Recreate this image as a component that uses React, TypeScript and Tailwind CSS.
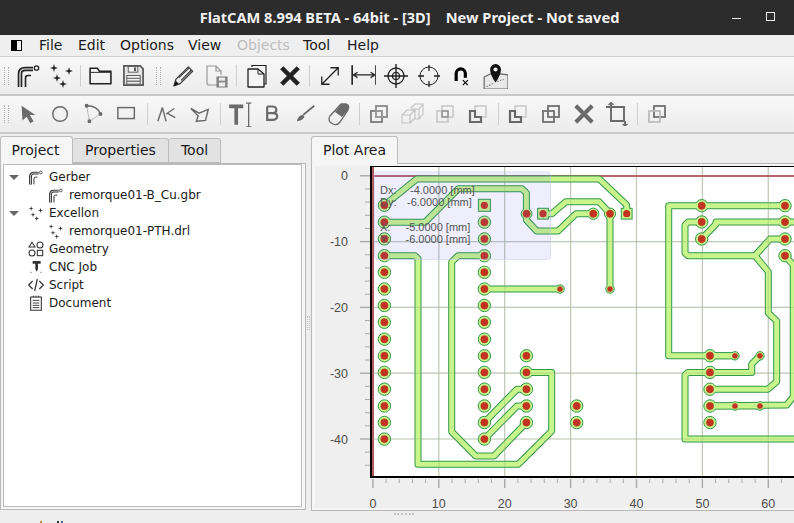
import React from "react";

const PADS_Y = [205.3, 222.2, 238.9, 255.7, 272.3, 289, 305.5, 322.3, 339.2, 355.8, 372.4, 389.2, 406, 422.5, 439.1];

type Pad = [number, number, number];

const PADS: Pad[] = [
  ...PADS_Y.map((y) => [384.4, y, 6.2] as Pad),
  ...PADS_Y.slice(1).map((y) => [484.4, y, 6.2] as Pad),
  [526.4, 355.8, 6.2],
  [526.4, 372.4, 6.2],
  [526.4, 389.2, 6.2],
  [526.4, 406, 6.2],
  [526.4, 422.5, 6.2],
  [526.6, 213.7, 5.4],
  [593.3, 213.7, 5.6],
  [610, 213.7, 5.6],
  [610, 289, 4.2],
  [560, 289, 4.2],
  [576.7, 406, 6.2],
  [576.7, 422.6, 6.2],
  [701.7, 205.7, 6.2],
  [701.7, 222, 6.2],
  [701.7, 239, 6.2],
  [785, 205.7, 6.2],
  [785, 222, 6.2],
  [785, 239, 6.2],
  [785, 255.7, 6.2],
  [710, 355.8, 6.2],
  [710, 372.4, 6.2],
  [710, 389.2, 6.2],
  [710, 406, 6.2],
  [710, 422.6, 6.2],
  [735, 355.8, 4.2],
  [760, 355.8, 4.2],
  [735, 406, 4.2],
  [760, 406, 4.2],
];

const SQUARES: [number, number, number][] = [
  [484.4, 205.3, 6],
  [543, 213.7, 5.4],
  [626.7, 213.7, 5.4],
];

const TRACKS = [
  "384.4,205.3 416.7,179 599.3,179 626.7,205 626.7,213.7",
  "384.4,222.2 425,222.2 458.3,188.7 522,188.7 526.4,193 526.4,220 536.7,231 558,231 576,213.7 593.3,213.7",
  "543,213.7 552,213.7 566,201.7 599,201.7 610,213.7 610,289",
  "384.4,255.7 415,255.7 418,258.5 418,464.3 518.3,464.3 551.7,431 551.7,372.4 526.4,372.4",
  "484.4,255.7 458,255.7 451.7,262 451.7,431.7 475.7,456 494,456 526.4,422.5",
  "484.4,422.5 517,389.2 526.4,389.2",
  "484.4,439.1 517,406 526.4,406",
  "484.4,289 560,289",
  "785,205.7 668.7,205.7 668.7,355.8 735,355.8",
  "701.7,222 688,222 685,225 685,253 688,255.7 755,255.7 770,239 785,239",
  "755,255.7 768.3,271.7 768.3,313 776.7,321 776.7,381.7 768,389.2 710,389.2",
  "701.7,239 716,224 716,222 800,222",
  "785,255.7 793.3,265 793.3,396.7 786.7,405 710,406",
  "760,355.8 751.7,364 751.7,372.4 688,372.4 685,375 685,439 800,439",
  "710,355.8 735,355.8",
  "710,406 760,406",
];

const X_LABELS = [0, 10, 20, 30, 40, 50, 60];
const Y_LABELS = [0, -10, -20, -30, -40];
const xAt = (u: number) => 372.9 + 6.59 * u;
const yAt = (v: number) => 175.8 - 6.58 * v;

function Plot() {
  const xMinor = Array.from({ length: 33 }, (_, i) => i * 2);
  const yMinor = Array.from({ length: 23 }, (_, i) => -i * 2);
  const grid = (
    <>
      {X_LABELS.slice(1).map((u) => (
        <line key={u} x1={xAt(u)} x2={xAt(u)} y1="167" y2="477" strokeWidth="1.2" />
      ))}
      {Y_LABELS.slice(1).map((v) => (
        <line key={v} x1="372" x2="794" y1={yAt(v)} y2={yAt(v)} strokeWidth="1.2" />
      ))}
    </>
  );
  return (
    <svg width="479" height="342" viewBox="315 166 479 342" className="block overflow-visible font-['Liberation_Sans',sans-serif]">
      <rect x="315" y="166" width="479" height="342" fill="#efefef" />
      <rect x="372" y="167" width="422" height="310" fill="#ffffff" />
      <g stroke="#d6d6d6">{grid}</g>
      <line x1="373" x2="794" y1="176" y2="176" stroke="#b9656a" strokeWidth="2" />
      <line x1="373" x2="373" y1="167" y2="477" stroke="#b05a5f" strokeWidth="2" />

      {TRACKS.map((t) => (
        <polyline key={t} points={t} fill="none" stroke="#32984a" strokeWidth="7" strokeLinejoin="round" strokeLinecap="round" />
      ))}
      {PADS.map(([x, y, r]) => (
        <circle key={`${x}-${y}`} cx={x} cy={y} r={r} fill="#c8f58c" stroke="#32984a" strokeWidth="1" />
      ))}
      {SQUARES.map(([x, y, r]) => (
        <rect key={x} x={x - r} y={y - r} width={r * 2} height={r * 2} fill="#c8f58c" stroke="#32984a" strokeWidth="1" />
      ))}
      {TRACKS.map((t) => (
        <polyline key={t} points={t} fill="none" stroke="#c8f58c" strokeWidth="5" strokeLinejoin="round" strokeLinecap="round" />
      ))}
      <g stroke="#8fae6c" strokeOpacity="0.3">{grid}</g>
      {PADS.map(([x, y, r]) => (
        <circle key={`${x}-${y}`} cx={x} cy={y} r={r > 5 ? 3.7 : 2.6} fill="#c4331f" stroke="#a33a25" strokeWidth="0.4" />
      ))}
      {SQUARES.map(([x, y]) => (
        <circle key={x} cx={x} cy={y} r="3.6" fill="#c4331f" />
      ))}

      <rect x="374.5" y="172" width="176" height="87.5" rx="3" fill="#6464f0" fillOpacity="0.11" stroke="#c8c8ee" strokeWidth="0.5" />
      <g fill="#555555" fontSize="11">
        <text x="380" y="194">Dx:</text>
        <text x="410" y="194">-4.0000 [mm]</text>
        <text x="380" y="206">Dy:</text>
        <text x="407" y="206">-6.0000 [mm]</text>
        <text x="380" y="231">X:</text>
        <text x="405.5" y="231">-5.0000 [mm]</text>
        <text x="380" y="243">Y:</text>
        <text x="405.5" y="243">-6.0000 [mm]</text>
      </g>

      <line x1="371" x2="371" y1="166" y2="478" stroke="#000000" strokeWidth="2" />
      <line x1="371" x2="794" y1="166.5" y2="166.5" stroke="#000000" strokeWidth="1" />
      <line x1="370" x2="794" y1="477" stroke="#000000" y2="477" strokeWidth="2" />

      {yMinor.map((v) => (
        <line key={v} x1={v % 10 === 0 ? 360 : 365} x2="370" y1={yAt(v)} y2={yAt(v)} stroke="#a8a8a8" strokeWidth={v % 10 === 0 ? 1.4 : 1} />
      ))}
      {xMinor.map((u) => (
        <line key={u} x1={xAt(u)} x2={xAt(u)} y1="479" y2={u % 10 === 0 ? 488 : 483} stroke="#a8a8a8" strokeWidth={u % 10 === 0 ? 1.4 : 1} />
      ))}
      <g fill="#4d4d4d" fontSize="12.5">
        {Y_LABELS.map((v) => (
          <text key={v} x="348" y={yAt(v) + 4.5} textAnchor="end">
            {v}
          </text>
        ))}
        {X_LABELS.map((u) => (
          <text key={u} x={xAt(u)} y="507.5" textAnchor="middle">
            {u}
          </text>
        ))}
      </g>
    </svg>
  );
}

function Svg({ children, className, size = 24 }: { children: React.ReactNode; className?: string; size?: number }) {
  return (
    <svg width={size} height={size} viewBox="0 0 24 24" fill="none" stroke="currentColor" strokeWidth="1.5" className={className}>
      {children}
    </svg>
  );
}

const GerberIcon = ({ size = 24 }: { size?: number }) => (
  <Svg size={size}>
    <path d="M4 23V10Q4 5 9 5H17" strokeWidth="4.6" />
    <path d="M4 23V10Q4 5 9 5H17" stroke="#f5f5f5" strokeWidth="1.2" />
    <path d="M9.5 23V14Q9.5 11.5 12 11.5H15" strokeWidth="1.6" />
    <circle cx="20.5" cy="4" r="2.2" strokeWidth="1.3" />
  </Svg>
);

const star = (x: number, y: number, r: number) =>
  `M${x} ${y - r}L${x + 0.9} ${y - 0.9}L${x + r} ${y}L${x + 0.9} ${y + 0.9}L${x} ${y + r}L${x - 0.9} ${y + 0.9}L${x - r} ${y}L${x - 0.9} ${y - 0.9}Z`;

const DrillIcon = ({ size = 24 }: { size?: number }) => (
  <Svg size={size}>
    <path d={star(5, 4, 4) + star(20, 7, 4) + star(8, 14, 4) + star(14, 20, 4)} fill="currentColor" stroke="none" />
  </Svg>
);

const FolderIcon = () => (
  <Svg size={25}>
    <path d="M2 20V5H9L11 8H22V20Z" strokeWidth="1.5" strokeLinejoin="round" />
    <path d="M2 9H22" strokeWidth="0.9" />
  </Svg>
);

const SaveIcon = () => (
  <Svg size={23}>
    <path d="M2 2H19L22 5V22H2Z" fill="#e6e6e6" stroke="#585858" strokeWidth="1.8" />
    <rect x="6.5" y="2.5" width="10" height="6" fill="#f2f2f2" stroke="#585858" strokeWidth="1" />
    <rect x="12.5" y="3.6" width="2.2" height="3.8" fill="#585858" stroke="none" />
    <rect x="5" y="12" width="14" height="9" fill="#f2f2f2" stroke="#585858" strokeWidth="1" />
    <path d="M5 15H19M5 18H19" stroke="#777" strokeWidth="1.4" />
  </Svg>
);

const PencilIcon = () => (
  <Svg size={23} className="text-[#3a3a3a]">
    <path d="M2 23L4 16L17 3L21.5 7.5L8.5 20.5Z" strokeWidth="1.3" strokeLinejoin="round" />
    <path d="M7 14.5L18 4M9.5 17L20 6.5" strokeWidth="1.2" />
    <path d="M2 23L4 17.5L7 20.5Z" fill="#111" stroke="none" />
  </Svg>
);

const FileSaveIcon = () => (
  <Svg size={24}>
    <path d="M13 21H4Q2 21 2 19V2H11L16 7V11M11 2V7H16" stroke="#9a9a9a" strokeWidth="1.2" />
    <rect x="12" y="13" width="10" height="10" fill="#8d8d8d" stroke="#777" strokeWidth="1" />
    <rect x="14" y="13.6" width="6" height="3" fill="#eee" stroke="none" />
    <rect x="14" y="18.5" width="6" height="4" fill="#eee" stroke="none" />
  </Svg>
);

const CopyIcon = () => (
  <Svg size={24}>
    <path d="M7 3V1.5H21V20H19" strokeWidth="1.2" />
    <path d="M3 5H13L19 10V23H3Z" fill="#f5f5f5" strokeWidth="1.3" strokeLinejoin="round" />
    <path d="M13 5V10H19" strokeWidth="1" />
  </Svg>
);

const CrossIcon = ({ thin }: { thin?: boolean }) => (
  <Svg size={22}>
    <path d="M3 3L21 21M21 3L3 21" strokeWidth={thin ? 4.4 : 5} />
  </Svg>
);

const ExpandIcon = () => (
  <Svg size={22}>
    <path d="M3 21L21 3M12.5 3H21V11.5M3 12.5V21H11.5" strokeWidth="1.4" />
  </Svg>
);

const MeasureIcon = () => (
  <Svg size={26}>
    <path d="M2 2V20M24 2V20" strokeWidth="1.5" />
    <path d="M3 11H23M3 11L7 8.5M3 11L7 13.5M23 11L19 8.5M23 11L19 13.5" strokeWidth="1.1" />
  </Svg>
);

const TargetBold = () => (
  <Svg size={24}>
    <circle cx="12" cy="12" r="8" strokeWidth="1.3" />
    <circle cx="12" cy="12" r="3.6" strokeWidth="1.3" />
    <path d="M12 0V24M0 12H24" strokeWidth="1.4" />
  </Svg>
);

const TargetThin = () => (
  <Svg size={24}>
    <circle cx="12" cy="12" r="9" strokeWidth="1" />
    <path d="M12 1V7M12 17V23M1 12H7M17 12H23" strokeWidth="1.3" />
  </Svg>
);

const MagnetIcon = () => (
  <Svg size={20} className="text-black">
    <path d="M5 18V9A5.5 5.5 0 0 1 16 9V14" strokeWidth="3.8" />
    <path d="M13 17L19 23M19 17L13 23" strokeWidth="1.4" />
  </Svg>
);

const MapIcon = () => (
  <Svg size={26}>
    <path d="M2 13L8 10H17L24 11V24H2Z" fill="#e8e8e8" stroke="#666" strokeWidth="1.1" />
    <path d="M4 22L10 19M14 17L20 15" stroke="#777" strokeWidth="1" strokeDasharray="1.4 1.4" />
    <path d="M12.5 18Q7.5 11 7.5 6A5 5 0 0 1 17.5 6Q17.5 11 12.5 18Z" fill="#111" stroke="none" />
    <circle cx="12.5" cy="6" r="1.9" fill="#f5f5f5" stroke="none" />
  </Svg>
);

const ArrowIcon = () => (
  <Svg size={22}>
    <path d="M5 3L20 13H14L18 20L14.5 22L10.5 15L6 19Z" fill="currentColor" stroke="none" />
  </Svg>
);

const CircleIcon = () => (
  <Svg size={22}>
    <circle cx="11" cy="12" r="8" strokeWidth="1.6" />
  </Svg>
);

const ArcIcon = () => (
  <Svg size={22}>
    <path d="M4 3L7 20L19 12" strokeWidth="0.8" stroke="#aaa" />
    <path d="M4 3Q16 3 19 12" strokeWidth="1.4" />
    <circle cx="4" cy="3" r="1.4" fill="currentColor" />
    <circle cx="19" cy="12" r="1.4" fill="currentColor" />
    <circle cx="7" cy="20" r="1.4" fill="currentColor" />
  </Svg>
);

const RectIcon = () => (
  <Svg size={22}>
    <rect x="2" y="5" width="18" height="12" strokeWidth="1.6" />
  </Svg>
);

const PathIcon = () => (
  <Svg size={22}>
    <path d="M2 20L7 5L11 20M11 12L20 6M12 11L21 16" strokeWidth="1.6" strokeLinejoin="bevel" />
  </Svg>
);

const PolyIcon = () => (
  <Svg size={22}>
    <path d="M2 6L11 11L21 7L18 19L8 20L10 14Z" strokeWidth="1.6" />
  </Svg>
);

const TextIcon = () => (
  <Svg size={26}>
    <path d="M2 5H15M8.5 5V22" strokeWidth="3.4" />
    <path d="M20 2V24M17.5 2H22.5M17.5 24H22.5" strokeWidth="1.2" />
  </Svg>
);

const BoldIcon = () => (
  <Svg size={20}>
    <path d="M5 3V19H12Q17 19 17 14.5Q17 11 12 11H5M12 11Q16 11 16 7Q16 3 11 3H5" strokeWidth="2.6" />
  </Svg>
);

const BrushIcon = () => (
  <Svg size={22}>
    <path d="M9 13L21 3" strokeWidth="2" />
    <path d="M2 20Q3 15 6 13.5Q9 12.5 10 14Q11 16 8 18Q5 20 2 20Z" fill="currentColor" stroke="none" />
  </Svg>
);

const EraserIcon = () => (
  <Svg size={24}>
    <path d="M14 2H19Q23 3 21 8L13 20Q10 24 6 22L3 20Q1 17 3 14Z" strokeWidth="1.3" />
    <path d="M14 2H19Q23 3 21 8L15 15L8 10Z" fill="currentColor" stroke="none" />
  </Svg>
);

// overlapping squares used by the geometry editor tools
function Squares({ front, back, inner, cut }: { front: string; back: string; inner?: string; cut?: boolean }) {
  return (
    <svg width="22" height="22" viewBox="0 0 22 22" fill="none">
      <rect x="8" y="3" width="11" height="11" stroke={back} strokeWidth="1.8" />
      {cut ? (
        <path d="M3 8H8V14H14V19H3Z" stroke={front} strokeWidth="2.2" />
      ) : (
        <rect x="3" y="8" width="11" height="11" stroke={front} strokeWidth="1.8" />
      )}
      {inner && <rect x="8" y="8" width="6" height="6" stroke={inner} strokeWidth="1.3" />}
    </svg>
  );
}

const BoxesIcon = () => (
  <Svg size={24} className="text-[#c2c2c2]">
    <path d="M2 13L7 8H15L10 13V21H2ZM10 13H2M10 21L15 16V8" strokeWidth="1.1" />
    <path d="M11 6L15 2H23V12L19 17H15M19 7H11M19 7V17M19 7L23 2" strokeWidth="1.1" />
  </Svg>
);

const CropIcon = () => (
  <Svg size={24}>
    <path d="M1 5H6V19H20M6 1V5M6 5H19V19M20 19V23" strokeWidth="1.9" />
    <path d="M3.5 3L6 0.5L8.5 3M17.5 22L20 24L22.5 22" strokeWidth="1.3" />
  </Svg>
);

const Slot = ({ children }: { children: React.ReactNode }) => (
  <div className="flex h-full w-[33px] shrink-0 items-center justify-center">{children}</div>
);

const Sep = () => (
  <div className="flex h-full w-[7px] shrink-0 items-center justify-center">
    <div className="h-[22px] w-px bg-[#cfcfcf]" />
  </div>
);

const Grip = () => <div className="h-[18px] w-[5px] shrink-0 border-x border-dotted border-[#b4b4b4]" />;

const MENU: [string, string][] = [
  ["File", "w-[39px]"],
  ["Edit", "w-[42px]"],
  ["Options", "w-[68px]"],
  ["View", "w-[49px]"],
  ["Objects", "w-[66px]"],
  ["Tool", "w-[44px]"],
  ["Help", "w-[40px]"],
];

const TREE = [
  { icon: <GerberIcon size={15} />, label: "Gerber", arrow: true },
  { icon: <GerberIcon size={15} />, label: "remorque01-B_Cu.gbr", child: true },
  { icon: <DrillIcon size={15} />, label: "Excellon", arrow: true },
  { icon: <DrillIcon size={15} />, label: "remorque01-PTH.drl", child: true },
  {
    icon: (
      <Svg size={16}>
        <path d="M6 2L10.5 9H1.5Z" strokeWidth="1.6" />
        <circle cx="18" cy="6" r="4.5" strokeWidth="1.6" />
        <circle cx="6" cy="18" r="4.5" strokeWidth="1.6" />
        <rect x="14" y="14" width="8" height="8" strokeWidth="1.6" />
      </Svg>
    ),
    label: "Geometry",
  },
  {
    icon: (
      <Svg size={16}>
        <path d="M7 3H19V7H15V15L13 19L11 15V7H7Z" fill="currentColor" stroke="none" />
        <path d="M4 20H5M19 20H20" strokeWidth="2" />
      </Svg>
    ),
    label: "CNC Job",
  },
  {
    icon: (
      <Svg size={16}>
        <path d="M7 6L1 12L7 18M17 6L23 12L17 18M14 3L10 21" strokeWidth="1.8" />
      </Svg>
    ),
    label: "Script",
  },
  {
    icon: (
      <Svg size={16}>
        <path d="M4 3H20V23H4Z" strokeWidth="1.6" />
        <path d="M7 8H17M7 12H17M7 15.5H17M7 19H17M8 1V4M12 1V4M16 1V4" strokeWidth="1.4" />
      </Svg>
    ),
    label: "Document",
  },
];

export default function App() {
  return (
    <div className="flex h-[523px] w-[794px] flex-col overflow-hidden bg-[#eeeeee] font-['DejaVu_Sans',sans-serif] text-[#1a1a1a]">
      {/* title bar */}
      <div className="relative flex h-[35px] shrink-0 items-center justify-center bg-[#2c2c2c] pl-[25px] font-['Noto_Sans',sans-serif] text-[14.6px] font-bold text-[#f2f2f2]">
        <span className="whitespace-pre">FlatCAM 8.994 BETA - 64bit - [3D]    New Project - Not saved</span>
        <div className="absolute left-[732px] top-[18px] h-px w-[9px] bg-[#eeeeee]" />
        <div className="absolute left-[766px] top-[12px] h-[9px] w-[9px] border border-[#eeeeee]" />
      </div>

      {/* menu */}
      <div className="flex h-[22px] shrink-0 items-center border-b border-[#cdcdcd] bg-[#efefef] pl-[11px] text-[14px]">
        <div className="mr-[17px] flex h-[11px] w-[11px] border border-black">
          <div className="w-[5px] bg-black" />
        </div>
        {MENU.map(([m, w]) => (
          <div key={m} className={`${w} ${m === "Objects" ? "text-[#bdbdbd]" : ""}`}>
            {m}
          </div>
        ))}
      </div>

      {/* main toolbar */}
      <div className="flex h-[39px] shrink-0 items-center border-b-2 border-[#c9c9c9] bg-gradient-to-b from-[#f8f8f8] to-[#ececec] pl-[4px] text-[#222222]">
        <Grip />
        <div className="w-[2px] shrink-0" />
        <Slot><GerberIcon /></Slot>
        <Slot><DrillIcon /></Slot>
        <Sep />
        <Slot><FolderIcon /></Slot>
        <Slot><SaveIcon /></Slot>
        <div className="flex h-full w-[17px] shrink-0 items-center justify-center"><Grip /></div>
        <Slot><PencilIcon /></Slot>
        <Slot><FileSaveIcon /></Slot>
        <Sep />
        <Slot><CopyIcon /></Slot>
        <Slot><CrossIcon /></Slot>
        <Sep />
        <Slot><ExpandIcon /></Slot>
        <Slot><MeasureIcon /></Slot>
        <Slot><TargetBold /></Slot>
        <Slot><TargetThin /></Slot>
        <Slot><MagnetIcon /></Slot>
        <Slot><MapIcon /></Slot>
      </div>

      {/* editor toolbar */}
      <div className="flex h-[38px] shrink-0 items-center border-b-2 border-[#c9c9c9] bg-gradient-to-b from-[#f8f8f8] to-[#ececec] pl-[4px] text-[#6a6a6a]">
        <Grip />
        <div className="w-[2.5px] shrink-0" />
        <Slot><ArrowIcon /></Slot>
        <Slot><CircleIcon /></Slot>
        <Slot><ArcIcon /></Slot>
        <Slot><RectIcon /></Slot>
        <Sep />
        <Slot><PathIcon /></Slot>
        <Slot><PolyIcon /></Slot>
        <Sep />
        <Slot><TextIcon /></Slot>
        <Slot><BoldIcon /></Slot>
        <Slot><BrushIcon /></Slot>
        <Slot><EraserIcon /></Slot>
        <Sep />
        <Slot><Squares front="#7a7a7a" back="#8a8a8a" inner="#a0a0a0" /></Slot>
        <Slot><BoxesIcon /></Slot>
        <Slot><Squares front="#cccccc" back="#cccccc" inner="#8a8a8a" /></Slot>
        <Slot><Squares front="#6a6a6a" back="#cfcfcf" cut /></Slot>
        <Sep />
        <Slot><Squares front="#666666" back="#cfcfcf" cut /></Slot>
        <Slot><Squares front="#707070" back="#707070" /></Slot>
        <Slot><CrossIcon thin /></Slot>
        <Slot><CropIcon /></Slot>
        <Sep />
        <Slot><Squares front="#bcbcbc" back="#707070" /></Slot>
      </div>

      {/* panes */}
      <div className="flex h-[376px] shrink-0 pt-[2px]">
        <div className="flex w-[306px] shrink-0 flex-col">
          <div className="flex h-[27px] shrink-0 items-end text-[14px]">
            <div className="z-10 -mb-px flex h-[28px] w-[73px] items-center justify-center rounded-t-[3px] border border-b-0 border-[#bdbdbd] bg-[#f6f6f6] pr-[2px]">
              Project
            </div>
            <div className="flex h-[25px] w-[96px] items-center justify-center rounded-t-[3px] border-y border-r border-[#bdbdbd] bg-[#e2e2e2]">
              Properties
            </div>
            <div className="flex h-[25px] w-[52px] items-center justify-center rounded-t-[3px] border-y border-r border-[#bdbdbd] bg-[#e2e2e2]">
              Tool
            </div>
          </div>
          <div className="flex-1 border border-[#b8b8b8] bg-[#f6f6f6] pb-[2px] pl-[2px] pr-[3px]">
            <div className="h-full border border-[#bbbbbb] bg-white pt-[3px] text-[12px]">
              {TREE.map((t) => (
                <div key={t.label} className={`flex h-[18px] items-center ${t.child ? "pl-[44px]" : "pl-[24px]"}`}>
                  {t.arrow && (
                    <div className="-ml-[19px] mr-[9px] h-0 w-0 border-x-[5px] border-t-[5px] border-x-transparent border-t-[#666666]" />
                  )}
                  <div className="flex w-[21px] shrink-0 items-center text-[#333333]">{t.icon}</div>
                  <span className="whitespace-nowrap">{t.label}</span>
                </div>
              ))}
            </div>
          </div>
        </div>

        <div className="flex w-[5px] shrink-0 items-center justify-center">
          <div className="h-[14px] w-[3px] border-x border-dotted border-[#c0c0c0]" />
        </div>

        <div className="flex min-w-0 flex-1 flex-col">
          <div className="flex h-[27px] shrink-0 items-end text-[14px]">
            <div className="z-10 -mb-px flex h-[28px] w-[87px] items-center justify-center rounded-t-[3px] border border-b-0 border-[#bdbdbd] bg-[#f6f6f6]">
              Plot Area
            </div>
          </div>
          <div className="flex-1 border-y border-l border-[#b8b8b8] bg-[#f6f6f6] pb-[2px] pl-[3px] pt-[2px]">
            <Plot />
          </div>
        </div>
      </div>

      {/* status bar, only its top shows */}
      <div className="relative flex-1">
        <div className="absolute left-[394px] top-[3px] h-[2px] w-[20px] border-t-2 border-dotted border-[#c4c4c4]" />
        <div className="absolute left-[40px] top-[11px] h-[2px] w-[2px] bg-[#c98a3a]" />
        <div className="absolute left-[57px] top-[11px] h-[2px] w-[2px] bg-[#333333]" />
        <div className="absolute left-[61px] top-[11px] h-[2px] w-[2px] bg-[#4a6ab0]" />
      </div>
    </div>
  );
}
